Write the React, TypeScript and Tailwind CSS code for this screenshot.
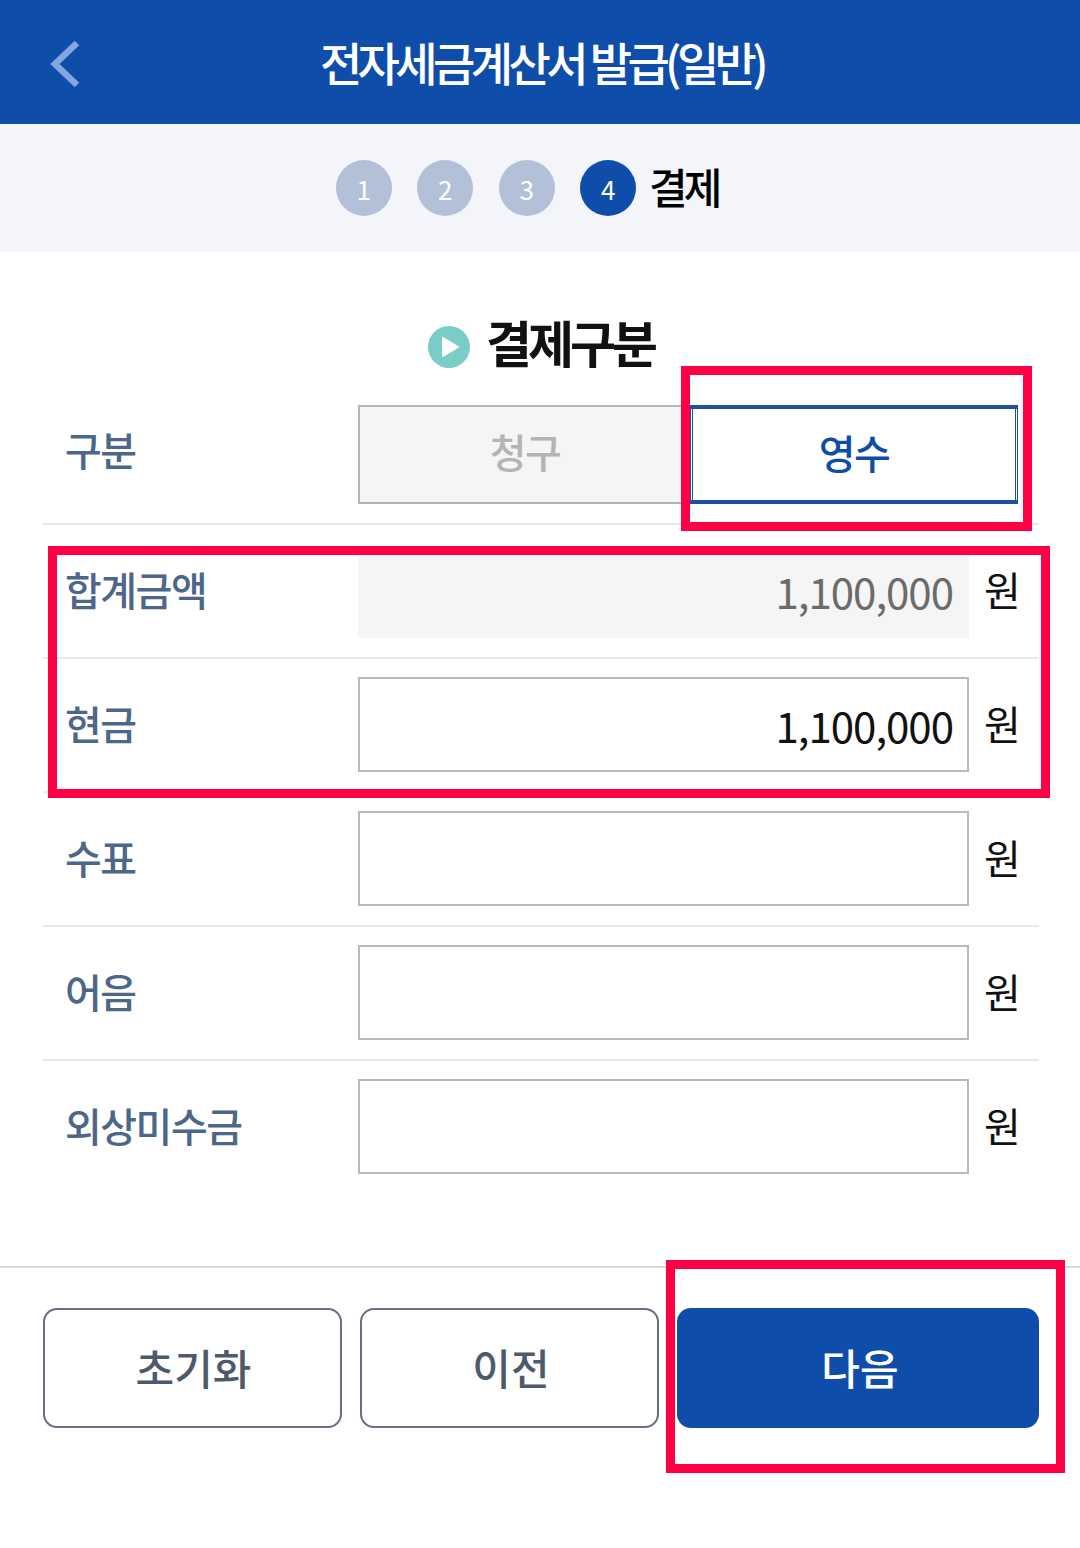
const FONT = "font-['Noto_Sans_CJK_KR','Noto_Sans',sans-serif]";

const rows = [
  { label: "합계금액", value: "1,100,000", readonly: true },
  { label: "현금", value: "1,100,000" },
  { label: "수표", value: "" },
  { label: "어음", value: "" },
  { label: "외상미수금", value: "" },
];

function Step({ n, active }: { n: number; active?: boolean }) {
  return (
    <div
      className={`flex h-[56px] w-[56px] items-center justify-center rounded-full text-[26px] text-white ${
        active ? "bg-[#0f4dab]" : "bg-[#b3c1d8]"
      }`}
    >
      {n}
    </div>
  );
}

export default function App() {
  return (
    <div className={`${FONT} relative h-[1548px] w-[1080px] overflow-hidden bg-white`}>
      {/* Header */}
      <div className="relative flex h-[124px] items-center justify-center bg-[#0f4dab]">
        <svg className="absolute left-[48px] top-[38px]" width="34" height="52" viewBox="0 0 34 52" fill="none">
          <path d="M29 5 L7 26 L29 47" stroke="#86a6dd" strokeWidth="6.5" />
        </svg>
        <h1 className="ml-[4px] pb-[2px] text-[46px] font-medium tracking-[-4.6px] text-white">전자세금계산서 발급(일반)</h1>
      </div>

      {/* Steps */}
      <div className="flex h-[128px] items-center justify-center gap-[25.5px] bg-[#f3f5fa] pr-[26px]">
        <Step n={1} />
        <Step n={2} />
        <Step n={3} />
        <div className="flex items-center gap-[13px]">
          <Step n={4} active />
          <span className="pb-[4px] text-[42px] font-medium leading-none tracking-[-4px] text-black">결제</span>
        </div>
      </div>

      {/* Section title */}
      <div className="flex h-[153px] items-start justify-center pt-[56px]">
        <div className="ml-[2px] flex items-center gap-[16px]">
          <svg width="42" height="42" viewBox="0 0 42 42">
            <circle cx="21" cy="21" r="21" fill="#7accc6" />
            <path d="M15 12 L30 21 L15 30 Z" fill="white" stroke="white" strokeWidth="2" strokeLinejoin="round" />
          </svg>
          <span className="pb-[12px] text-[50px] font-bold leading-[66px] tracking-[-4px] text-[#111]">결제구분</span>
        </div>
      </div>

      {/* Form */}
      <div className="pl-[43px] pr-[41px]">
        <div className="flex h-[120px] items-start border-b-2 border-[#e4e7ec]">
          <span className="w-[315px] pl-[22px] pt-[18px] text-[40px] font-medium leading-[52px] tracking-[-1.5px] text-[#4e6688]">구분</span>
          <div className="flex h-[99px] w-[660px]">
            <div className="flex flex-1 items-center justify-center border-2 border-r-0 border-[#b4b4b4] bg-[#f5f5f6] pb-[8px] text-[40px] font-medium tracking-[-1.5px] text-[#b4b4b4]">청구</div>
            <div className="flex w-[328px] items-center justify-center border-x-[1px] border-y-[4px] border-[#1f4f9f] pb-[6px] text-[40px] font-medium tracking-[-1.5px] text-[#0f4dab] shadow-[inset_1px_0_0_#fff,inset_-1px_0_0_#fff,inset_2px_0_0_#1f4f9f,inset_-2px_0_0_#1f4f9f]">영수</div>
          </div>
        </div>

        {rows.map((r, i) => (
          <div key={r.label} className={`flex h-[134px] items-center border-b-2 ${i < 4 ? "border-[#e4e7ec]" : "border-transparent"}`}>
            <span className="w-[315px] pb-[4px] pl-[22px] text-[40px] font-medium leading-[52px] tracking-[-1.5px] text-[#4e6688]">{r.label}</span>
            <div
              className={`flex w-[611px] items-center justify-end text-[42px] tracking-[-1px] ${
                r.readonly
                  ? "mt-[10px] h-[84px] bg-[#f5f5f6] pb-[12px] pr-[16px] text-[#6b6b6b]"
                  : "mb-[1px] h-[95px] border-2 border-[#b9b9b9] pr-[14px] text-[#111]"
              }`}
            >
              {r.value}
            </div>
            <span className="ml-[15px] pb-[4px] text-[40px] leading-none text-[#111]">원</span>
          </div>
        ))}
      </div>

      {/* Footer */}
      <div className="mt-[71px] flex gap-[18px] border-t-2 border-[#d9d9d9] pl-[43px] pr-[41px] pt-[40px]">
        <button className="h-[120px] w-[299px] rounded-[14px] border-2 border-[#667085] pb-[4px] pl-[2px] text-[42px] font-medium text-[#4e5a6b]">초기화</button>
        <button className="h-[120px] w-[299px] rounded-[14px] border-2 border-[#667085] pb-[4px] pl-[3px] text-[42px] font-medium text-[#4e5a6b]">이전</button>
        <button className="h-[120px] w-[362px] rounded-[14px] bg-[#0f4dab] pb-[4px] pl-[4px] text-[42px] font-medium text-white">다음</button>
      </div>

      {/* Red annotation boxes */}
      <div className="absolute left-[681px] top-[366px] h-[165px] w-[351px] border-[9px] border-[#ff0044]" />
      <div className="absolute left-[48px] top-[546px] h-[252px] w-[1002px] border-[9px] border-[#ff0044]" />
      <div className="absolute left-[666px] top-[1260px] h-[213px] w-[399px] border-[9px] border-[#ff0044]" />
    </div>
  );
}
